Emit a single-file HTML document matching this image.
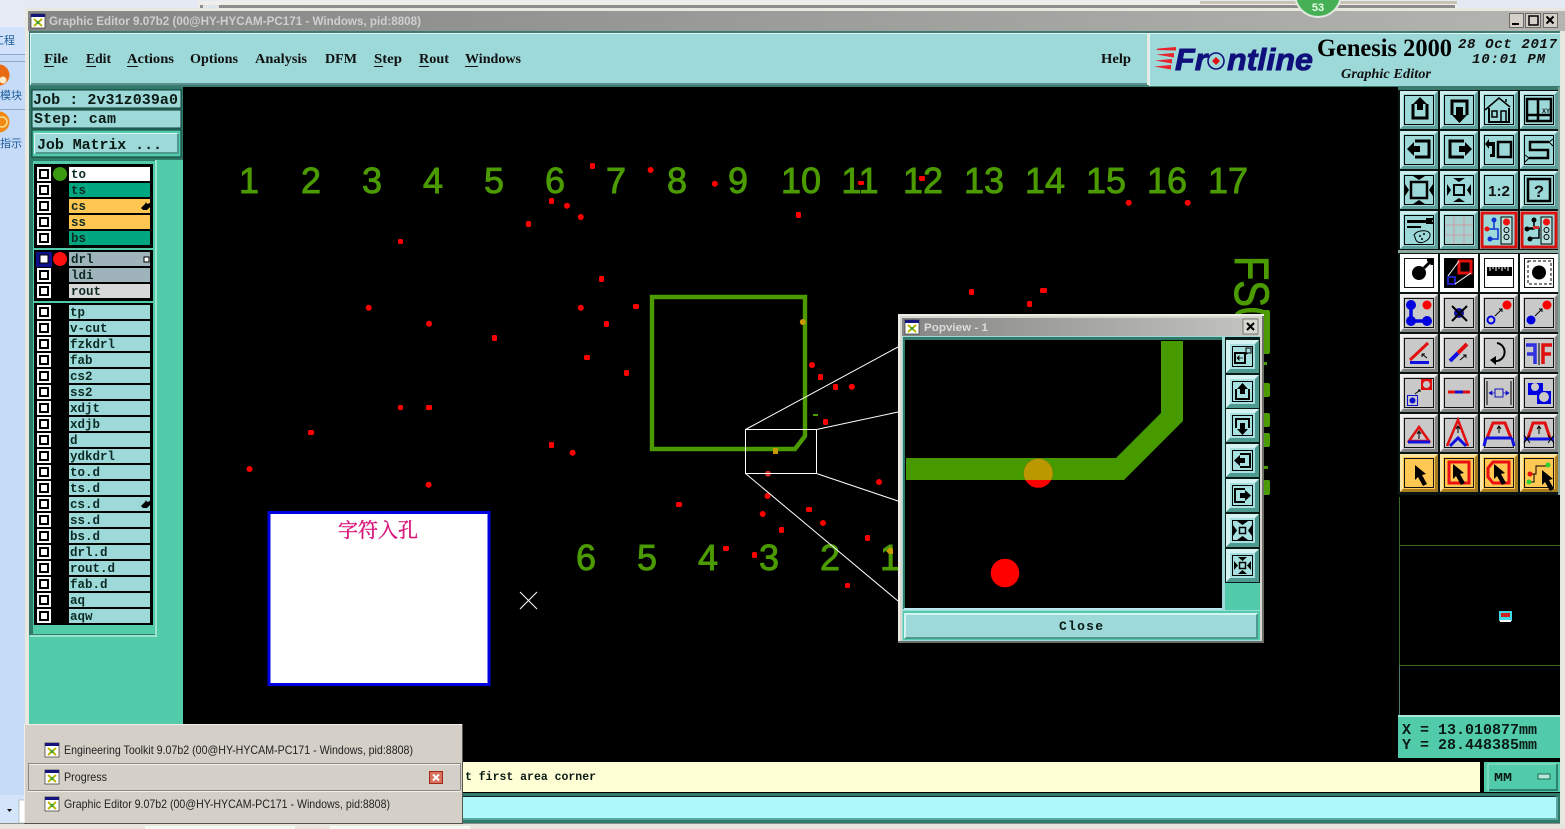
<!DOCTYPE html>
<html><head><meta charset="utf-8"><title>Genesis 2000 Graphic Editor</title>
<style>
html,body{margin:0;padding:0;background:#000;width:1565px;height:829px;overflow:hidden}
svg{display:block}
.m{font-family:"Liberation Mono",monospace;font-weight:bold;fill:#0a1a14}
.l{font-family:"Liberation Mono",monospace;font-weight:bold;font-size:12.5px;fill:#0c2a24}
.s{font-family:"Liberation Serif",serif;font-weight:bold;font-size:14px;fill:#111}
.t{font-family:"Liberation Sans",sans-serif;font-size:12px;fill:#222}
.g{font-family:"Liberation Sans",sans-serif;font-size:36px;fill:#4b9b00;stroke:#4b9b00;stroke-width:.9px}
.dots rect{rx:1.5px;ry:1.5px}
</style></head><body>
<svg width="1565" height="829" viewBox="0 0 1565 829" xmlns="http://www.w3.org/2000/svg">
<defs>
<linearGradient id="tb" x1="0" x2="1" y1="0" y2="0"><stop offset="0" stop-color="#858585"/><stop offset="1" stop-color="#b4b4b0"/></linearGradient>
<linearGradient id="tb2" x1="0" x2="1" y1="0" y2="0"><stop offset="0" stop-color="#858585"/><stop offset="1" stop-color="#c4c4c0"/></linearGradient>
<g id="c"><rect width="38" height="38" fill="#9dd9d9"/><path d="M0,0H38L35,3H3V35L0,38Z" fill="#cdeeee"/><path d="M38,38H0L3,35H35V3L38,0Z" fill="#5f9f9c"/><rect x="4.5" y="4.5" width="29" height="29" fill="none" stroke="#000"/></g>
<g id="a"><rect width="38" height="38" fill="#c9c9c9"/><path d="M0,0H38L35,3H3V35L0,38Z" fill="#efefef"/><path d="M38,38H0L3,35H35V3L38,0Z" fill="#858585"/><rect x="4.5" y="4.5" width="29" height="29" fill="none" stroke="#111"/></g>
<g id="y"><rect width="38" height="38" fill="#ffc852"/><path d="M0,0H38L35,3H3V35L0,38Z" fill="#ffe6a0"/><path d="M38,38H0L3,35H35V3L38,0Z" fill="#a87c20"/><rect x="4.5" y="4.5" width="29" height="29" fill="none" stroke="#111"/></g>
<g id="w"><rect width="38" height="38" fill="#fff"/><rect x="4.5" y="4.5" width="29" height="29" fill="none" stroke="#111"/></g>
<g id="p"><rect width="33" height="33" fill="#a6e0e0"/><path d="M0,0H33L29,4H4V29L0,33Z" fill="#d6f3f3"/><path d="M33,33H0L4,29H29V4L33,0Z" fill="#4f9a90"/><rect x="6.5" y="6.5" width="20" height="20" fill="none" stroke="#000"/></g>
<path id="ar" d="M0,0L11,9L7,10L12,19L8,21L3,12L0,15Z" fill="#000"/>
<g id="ck"><rect width="14" height="14" fill="#fff"/><rect x="3" y="3" width="8" height="8" fill="#fff" stroke="#000" stroke-width="2"/></g>
<g id="ic"><rect width="14" height="14" fill="#fff" stroke="#333" stroke-width=".7"/><rect width="14" height="3" fill="#14147c"/><path d="M3,5L11,12M11,5L3,12" stroke="#b8b800" stroke-width="2"/><rect x="5.5" y="7" width="3" height="3" fill="#40a040"/></g>
<path id="hand" d="M1,7L5,3L6,1L7,3L10,2V6L7,9H3Z" fill="#000"/>
<clipPath id="main"><rect x="183" y="87" width="1215" height="673"/></clipPath>
<clipPath id="tr"><path d="M1161,341H1183V421L1124,480H906V458H1116L1161,413Z"/></clipPath>
<clipPath id="bd"><rect x="1290" y="0" width="60" height="19"/></clipPath>
</defs>

<!-- desktop background -->
<rect width="1565" height="829" fill="#c6dbf8"/>
<rect width="1565" height="9" fill="#e4e9f4"/>
<rect x="198" y="1" width="1259" height="9" fill="#efeee8"/>
<rect x="200" y="5" width="1255" height="5" fill="#8c8c8c"/>
<rect x="203" y="5" width="16" height="5" fill="#dfe4ea"/>
<rect x="1200" y="1" width="257" height="3" fill="#c8c2b4"/>
<rect x="0" y="27" width="25" height="27" fill="#d2e2fa"/>
<rect x="0" y="54" width="25" height="1" fill="#8ea8cc"/><rect x="0" y="61" width="25" height="1" fill="#8ea8cc"/>
<rect x="0" y="109" width="25" height="1" fill="#8ea8cc"/>
<rect x="0" y="0" width="25" height="27" fill="#e6ebf5"/>
<text x="-7" y="44" font-family="'Liberation Sans','Noto Sans CJK SC',sans-serif" font-size="11" fill="#1d5c9a">工程</text>
<circle cx="-1" cy="75" r="10.5" fill="#e96a12"/><circle cx="3" cy="80" r="3.500" fill="#ffe8c8"/>
<text x="0" y="99" font-family="'Liberation Sans','Noto Sans CJK SC',sans-serif" font-size="11" fill="#1d5c9a">模块</text>
<circle cx="-1" cy="122" r="10.5" fill="#f08a14"/><circle cx="2" cy="122" r="5" fill="none" stroke="#ffdf90" stroke-width="1.500"/>
<text x="0" y="147" font-family="'Liberation Sans','Noto Sans CJK SC',sans-serif" font-size="11" fill="#1d5c9a">指示</text>

<!-- main window -->
<rect x="25" y="8" width="1540" height="816" fill="#e8e8e0"/>
<rect x="28" y="11" width="1537" height="20" fill="url(#tb)"/>
<g clip-path="url(#bd)"><circle cx="1318" cy="-6" r="24" fill="#e0e8e0"/><circle cx="1318" cy="-6" r="22" fill="#46b056"/></g>
<text x="1318" y="11" text-anchor="middle" font-family="'Liberation Sans',sans-serif" font-size="11" font-weight="bold" fill="#e8ffe8">53</text>
<use href="#ic" x="31" y="14"/>
<text x="49" y="25" font-family="'Liberation Sans',sans-serif" font-weight="bold" font-size="11.5" fill="#cfcfcf" textLength="372" lengthAdjust="spacingAndGlyphs">Graphic Editor 9.07b2 (00@HY-HYCAM-PC171 - Windows, pid:8808)</text>
<g fill="#d4d0c8" stroke="#555" stroke-width=".8"><rect x="1509.5" y="13.5" width="14" height="14"/><rect x="1525.5" y="13.5" width="15" height="14"/><rect x="1543.5" y="13.5" width="14" height="14"/></g>
<path d="M1512,24h7" stroke="#000" stroke-width="2"/><rect x="1529" y="16" width="9" height="9" fill="none" stroke="#000" stroke-width="1.5"/><path d="M1546.5,16.5l7,7m0,-7l-7,7" stroke="#000" stroke-width="2"/>

<!-- menu bar -->
<rect x="29" y="31" width="1531" height="56" fill="#3c7c70"/>
<rect x="30" y="33" width="1117" height="52" fill="#9dd9d9"/><path d="M30,33H1147V34H31V85H30Z" fill="#e0f6f6"/><rect x="31" y="83" width="1116" height="2" fill="#5a9090"/>
<rect x="1149" y="33" width="411" height="53" fill="#9dd9d9"/><path d="M1149,33H1560V34H1150V86H1149Z" fill="#e0f6f6"/>
<rect x="1147" y="33" width="2" height="52" fill="#e8e8e0"/>
<g class="s">
<text class="s" x="44" y="63" textLength="24" lengthAdjust="spacingAndGlyphs">File</text><rect x="44" y="66" width="10" height="1" fill="#111"/>
<text class="s" x="86" y="63" textLength="25" lengthAdjust="spacingAndGlyphs">Edit</text><rect x="86" y="66" width="10" height="1" fill="#111"/>
<text class="s" x="127" y="63" textLength="47" lengthAdjust="spacingAndGlyphs">Actions</text><rect x="127" y="66" width="11" height="1" fill="#111"/>
<text class="s" x="190" y="63" textLength="48" lengthAdjust="spacingAndGlyphs">Options</text>
<text class="s" x="255" y="63" textLength="52" lengthAdjust="spacingAndGlyphs">Analysis</text>
<text class="s" x="325" y="63" textLength="32" lengthAdjust="spacingAndGlyphs">DFM</text>
<text class="s" x="374" y="63" textLength="28" lengthAdjust="spacingAndGlyphs">Step</text><rect x="374" y="66" width="9" height="1" fill="#111"/>
<text class="s" x="419" y="63" textLength="30" lengthAdjust="spacingAndGlyphs">Rout</text><rect x="419" y="66" width="10" height="1" fill="#111"/>
<text class="s" x="465" y="63" textLength="56" lengthAdjust="spacingAndGlyphs">Windows</text><rect x="465" y="66" width="13" height="1" fill="#111"/>
<text class="s" x="1101" y="63" textLength="30" lengthAdjust="spacingAndGlyphs">Help</text>
</g>
<!-- logo -->
<path d="M1158,48.500L1176,47V50.500L1156,50ZM1156,54.500L1174,53V57.500ZM1155,60.500L1172,59V63.500ZM1154,66.500L1171,65V69.500Z" fill="#e8242c"/>
<text x="1175" y="70" font-family="'Liberation Sans',sans-serif" font-weight="bold" font-style="italic" font-size="31" fill="#10107c" stroke="#10107c" stroke-width=".9" textLength="138" lengthAdjust="spacingAndGlyphs">Fr<tspan fill="transparent" stroke="none">o</tspan>ntline</text>
<circle cx="1216" cy="61" r="8" fill="none" stroke="#10107c" stroke-width="1.6"/><path d="M1216,57l4,4l-4,4l-4,-4Z" fill="#e01010"/>
<text x="1317" y="56" font-family="'Liberation Serif',serif" font-size="25" font-weight="bold" fill="#000" textLength="135" lengthAdjust="spacingAndGlyphs">Genesis 2000</text>
<text x="1341" y="78" font-family="'Liberation Serif',serif" font-size="14" font-weight="bold" font-style="italic" fill="#111" textLength="90" lengthAdjust="spacingAndGlyphs">Graphic Editor</text>
<text x="1458" y="48" font-family="'Liberation Mono',monospace" font-size="14" font-style="italic" font-weight="bold" fill="#111" textLength="99">28 Oct 2017</text>
<text x="1472" y="63" font-family="'Liberation Mono',monospace" font-size="14" font-style="italic" font-weight="bold" fill="#111" textLength="73">10:01 PM</text>

<!-- left panel -->
<rect x="29" y="87" width="155" height="673" fill="#52cbaa"/>
<rect x="29" y="87" width="154" height="73" fill="#2f7a68"/>
<rect x="32" y="90" width="149" height="18" fill="#9dd9d9" stroke="#0e3c34" stroke-width="1"/>
<rect x="32" y="110" width="149" height="18" fill="#9dd9d9" stroke="#0e3c34" stroke-width="1"/>
<text class="m" x="33" y="104" font-size="15" textLength="145">Job : 2v31z039a0</text>
<text class="m" x="34" y="123" font-size="15" textLength="82">Step: cam</text>
<rect x="32" y="130" width="149" height="27" fill="#52cbaa" stroke="#0e3c34"/>
<rect x="34" y="133" width="145" height="21" fill="#9dd9d9"/><path d="M34,133H179L178,134H35V154L34,154Z" fill="#e0f6f6"/><path d="M179,154H35L36,152H177V134L179,133Z" fill="#4f9a90"/>
<text class="m" x="37" y="149" font-size="15" textLength="125">Job Matrix ...</text>
<rect x="29.500" y="160.500" width="126" height="474" fill="#52cbaa" stroke="#2f7a68" stroke-width="1"/>
<rect x="30" y="160" width="3" height="475" fill="#2f7a68"/>
<rect x="155" y="160" width="2" height="476" fill="#9ce4d0"/>
<rect x="30" y="635" width="127" height="2" fill="#9ce4d0"/>

<!-- layer groups -->
<rect x="34" y="164" width="119" height="84" fill="#000"/>
<rect x="34" y="250" width="119" height="51" fill="#000"/>
<rect x="34" y="303" width="119" height="322" fill="#000"/>
<g>
<use href="#ck" x="37" y="167"/><rect x="69" y="167" width="81" height="14" fill="#fff"/><circle cx="60" cy="174" r="7" fill="#3c9a10"/><text class="l" x="71" y="178">to</text>
<use href="#ck" x="37" y="183"/><rect x="69" y="183" width="81" height="14" fill="#00a680"/><text class="l" x="71" y="194">ts</text>
<use href="#ck" x="37" y="199"/><rect x="69" y="199" width="81" height="14" fill="#ffc652"/><text class="l" x="71" y="210">cs</text><use href="#hand" x="140" y="201"/>
<use href="#ck" x="37" y="215"/><rect x="69" y="215" width="81" height="14" fill="#ffc652"/><text class="l" x="71" y="226">ss</text>
<use href="#ck" x="37" y="231"/><rect x="69" y="231" width="81" height="14" fill="#00a680"/><text class="l" x="71" y="242">bs</text>

<rect x="36" y="252" width="16" height="15" fill="#10108c"/><rect x="40" y="255" width="8" height="8" fill="#fff" stroke="#000"/><circle cx="60" cy="259" r="7" fill="#ff1010"/><rect x="69" y="252" width="81" height="14" fill="#9fb4ba"/><text class="l" x="71" y="263">drl</text><rect x="144" y="257" width="5" height="5" fill="#fff" stroke="#000"/>
<use href="#ck" x="37" y="268"/><rect x="69" y="268" width="81" height="14" fill="#9fb4ba"/><text class="l" x="71" y="279">ldi</text>
<use href="#ck" x="37" y="284"/><rect x="69" y="284" width="81" height="14" fill="#d8d8d8"/><text class="l" x="71" y="295">rout</text>

<g fill="#9dd9d9">
<rect x="69" y="305" width="81" height="14"/><rect x="69" y="321" width="81" height="14"/><rect x="69" y="337" width="81" height="14"/><rect x="69" y="353" width="81" height="14"/><rect x="69" y="369" width="81" height="14"/><rect x="69" y="385" width="81" height="14"/><rect x="69" y="401" width="81" height="14"/><rect x="69" y="417" width="81" height="14"/><rect x="69" y="433" width="81" height="14"/><rect x="69" y="449" width="81" height="14"/><rect x="69" y="465" width="81" height="14"/><rect x="69" y="481" width="81" height="14"/><rect x="69" y="497" width="81" height="14"/><rect x="69" y="513" width="81" height="14"/><rect x="69" y="529" width="81" height="14"/><rect x="69" y="545" width="81" height="14"/><rect x="69" y="561" width="81" height="14"/><rect x="69" y="577" width="81" height="14"/><rect x="69" y="593" width="81" height="14"/><rect x="69" y="609" width="81" height="14"/>
</g>
<use href="#ck" x="37" y="305"/><use href="#ck" x="37" y="321"/><use href="#ck" x="37" y="337"/><use href="#ck" x="37" y="353"/><use href="#ck" x="37" y="369"/><use href="#ck" x="37" y="385"/><use href="#ck" x="37" y="401"/><use href="#ck" x="37" y="417"/><use href="#ck" x="37" y="433"/><use href="#ck" x="37" y="449"/><use href="#ck" x="37" y="465"/><use href="#ck" x="37" y="481"/><use href="#ck" x="37" y="497"/><use href="#ck" x="37" y="513"/><use href="#ck" x="37" y="529"/><use href="#ck" x="37" y="545"/><use href="#ck" x="37" y="561"/><use href="#ck" x="37" y="577"/><use href="#ck" x="37" y="593"/><use href="#ck" x="37" y="609"/>
<text class="l" x="70" y="316">tp</text><text class="l" x="70" y="332">v-cut</text><text class="l" x="70" y="348">fzkdrl</text><text class="l" x="70" y="364">fab</text><text class="l" x="70" y="380">cs2</text><text class="l" x="70" y="396">ss2</text><text class="l" x="70" y="412">xdjt</text><text class="l" x="70" y="428">xdjb</text><text class="l" x="70" y="444">d</text><text class="l" x="70" y="460">ydkdrl</text><text class="l" x="70" y="476">to.d</text><text class="l" x="70" y="492">ts.d</text><text class="l" x="70" y="508">cs.d</text><text class="l" x="70" y="524">ss.d</text><text class="l" x="70" y="540">bs.d</text><text class="l" x="70" y="556">drl.d</text><text class="l" x="70" y="572">rout.d</text><text class="l" x="70" y="588">fab.d</text><text class="l" x="70" y="604">aq</text><text class="l" x="70" y="620">aqw</text>
<use href="#hand" x="140" y="499"/>
</g>

<!-- main canvas -->
<rect x="183" y="87" width="1215" height="673" fill="#000"/>
<g clip-path="url(#main)">
<g text-anchor="middle">
<text class="g" x="249" y="193">1</text><text class="g" x="311" y="193">2</text><text class="g" x="372" y="193">3</text><text class="g" x="433" y="193">4</text><text class="g" x="494" y="193">5</text><text class="g" x="555" y="193">6</text><text class="g" x="616" y="193">7</text><text class="g" x="677" y="193">8</text><text class="g" x="738" y="193">9</text><text class="g" x="801" y="193">10</text><text class="g" x="860" y="193">11</text><text class="g" x="923" y="193">12</text><text class="g" x="984" y="193">13</text><text class="g" x="1045" y="193">14</text><text class="g" x="1106" y="193">15</text><text class="g" x="1167" y="193">16</text><text class="g" x="1228" y="193">17</text>
<text class="g" x="586" y="570">6</text><text class="g" x="647" y="570">5</text><text class="g" x="708" y="570">4</text><text class="g" x="769" y="570">3</text><text class="g" x="830" y="570">2</text><text class="g" x="890" y="570">1</text>
</g>
<text transform="translate(1235,256) rotate(90) scale(.83,1)" font-family="'Liberation Sans',sans-serif" font-size="48" fill="#4b9b00" stroke="#4b9b00" stroke-width="1">FS0</text>
<g fill="#4b9b00"><rect x="1262" y="310" width="8" height="44" rx="2"/><rect x="1262" y="362" width="5" height="3"/><rect x="1262" y="383" width="8" height="14" rx="2"/><rect x="1262" y="413" width="8" height="14" rx="2"/><rect x="1262" y="433" width="8" height="14" rx="2"/><rect x="1262" y="466" width="6" height="3"/><rect x="1262" y="480" width="8" height="15" rx="2"/></g>
<path d="M652,449V297H805V436L795,449H652Z" fill="none" stroke="#4b9b00" stroke-width="4.400"/>
<g fill="#ff0000" class="dots">
<rect x="590" y="163" width="5" height="6"/><circle cx="650.600" cy="170" r="3"/><circle cx="714.800" cy="183.700" r="3"/><rect x="858" y="181" width="6" height="4"/><rect x="549" y="198" width="5" height="6"/><circle cx="567" cy="205.700" r="3"/><circle cx="580.800" cy="217" r="3"/><rect x="526" y="221" width="5" height="6"/><rect x="796" y="212" width="5" height="6"/><rect x="398" y="239" width="5" height="5"/><rect x="599" y="276" width="5" height="6"/><circle cx="368.700" cy="307.700" r="3"/><circle cx="580.800" cy="307.700" r="3"/><rect x="633" y="304" width="6" height="5"/><circle cx="429" cy="323.700" r="3"/><rect x="604" y="321" width="5" height="6"/><rect x="492" y="335" width="5" height="6"/><rect x="584" y="355" width="6" height="5"/><rect x="624" y="370" width="5" height="6"/><circle cx="812" cy="365" r="3"/><rect x="818" y="374" width="5" height="6"/><rect x="833" y="384" width="5" height="6"/><circle cx="851.800" cy="386.700" r="3"/><rect x="398" y="405" width="5" height="5"/><rect x="426" y="405" width="6" height="5"/><rect x="823" y="419" width="5" height="6"/><rect x="308" y="430" width="6" height="5"/><rect x="549" y="442" width="5" height="6"/><circle cx="572.600" cy="452.700" r="3"/><circle cx="249.500" cy="469" r="3"/><circle cx="428.600" cy="484.700" r="3"/><circle cx="768" cy="473.700" r="3" fill="#c83030"/><circle cx="767.500" cy="496" r="3"/><circle cx="879" cy="482" r="3"/><rect x="676" y="502" width="6" height="5"/><circle cx="762.700" cy="514" r="3"/><rect x="806" y="507" width="6" height="5"/><circle cx="823" cy="523" r="3"/><rect x="779" y="527" width="5" height="6"/><rect x="865" y="535" width="5" height="6"/><rect x="723" y="546" width="6" height="5"/><rect x="752" y="552" width="5" height="6"/><rect x="845" y="583" width="5" height="5"/><rect x="919" y="176" width="6" height="5"/><circle cx="1128.700" cy="202.700" r="3"/><circle cx="1187.700" cy="202.700" r="3"/><rect x="969" y="289" width="5" height="6"/><rect x="1040" y="288" width="7" height="5"/><rect x="1027" y="301" width="5" height="6"/>
</g>
<g fill="#c89a00"><circle cx="802.800" cy="322" r="3"/><rect x="773" y="448" width="5" height="6"/><path d="M886,551l4,-4l3,2v5h-4z"/></g>
<rect x="813" y="414" width="5" height="2" fill="#4b9b00"/>
<g fill="none" stroke="#fff" stroke-width="1"><rect x="745.500" y="429.500" width="71" height="44"/><path d="M745.500,429.500L898,347M816.500,429.500L898,412M816.500,473.500L898,501M745.500,473.500L898,601M520,592L537,609M537,592L520,609"/></g>
<rect x="269" y="512.500" width="220" height="172" fill="#fff" stroke="#0000e0" stroke-width="3"/>
<text x="378" y="537" text-anchor="middle" font-family="'Liberation Serif','Noto Serif CJK SC',serif" font-size="20" fill="#d8187c" stroke="#d8187c" stroke-width=".4">字符入孔</text>
</g>

<!-- right toolbars -->
<rect x="1398" y="87" width="162" height="410" fill="#0a1412"/>
<rect x="1398" y="87" width="162" height="3" fill="#3c7c70"/>
<rect x="1558" y="87" width="2" height="410" fill="#7f9f98"/>
<rect x="1398" y="250" width="162" height="3" fill="#8aa8a0"/>
<g>
<use href="#c" x="1400" y="91"/><use href="#c" x="1440" y="91"/><use href="#c" x="1480" y="91"/><use href="#c" x="1520" y="91"/>
<use href="#c" x="1400" y="131"/><use href="#c" x="1440" y="131"/><use href="#c" x="1480" y="131"/><use href="#c" x="1520" y="131"/>
<use href="#c" x="1400" y="171"/><use href="#c" x="1440" y="171"/><use href="#c" x="1480" y="171"/><use href="#c" x="1520" y="171"/>
<use href="#c" x="1400" y="211"/><use href="#c" x="1440" y="211"/><use href="#c" x="1480" y="211"/><use href="#c" x="1520" y="211"/>
<use href="#w" x="1400" y="254"/><rect x="1440" y="254" width="38" height="38" fill="#fff"/><rect x="1444" y="258" width="30" height="30" fill="#000"/><use href="#w" x="1480" y="254"/><use href="#w" x="1520" y="254"/>
<use href="#a" x="1400" y="294"/><use href="#a" x="1440" y="294"/><use href="#a" x="1480" y="294"/><use href="#a" x="1520" y="294"/>
<use href="#a" x="1400" y="334"/><use href="#a" x="1440" y="334"/><use href="#a" x="1480" y="334"/><use href="#a" x="1520" y="334"/>
<use href="#a" x="1400" y="374"/><use href="#a" x="1440" y="374"/><use href="#a" x="1480" y="374"/><use href="#a" x="1520" y="374"/>
<use href="#a" x="1400" y="414"/><use href="#a" x="1440" y="414"/><use href="#a" x="1480" y="414"/><use href="#a" x="1520" y="414"/>
<use href="#y" x="1400" y="454"/><use href="#y" x="1440" y="454"/><use href="#y" x="1480" y="454"/><use href="#y" x="1520" y="454"/>
</g>
<!-- row 1 icons -->
<g transform="translate(1400,91)"><path d="M13,13V27H27V13" fill="none" stroke="#000" stroke-width="3"/><path d="M20,6L27,13H23V19H17V13H13Z"/></g>
<g transform="translate(1440,91)"><path d="M12,24V10H27V24" fill="none" stroke="#000" stroke-width="3"/><path d="M16,16H23V24H27L19.500,32L12,24H16Z"/></g>
<g transform="translate(1480,91)" fill="none" stroke="#000" stroke-width="1.500"><path d="M5,19L19,7L30,16"/><path d="M9,17V31H29V17" stroke-width="2"/><rect x="12" y="20" width="5" height="6"/><path d="M21,31V20H26V31"/><path d="M26,11V8" stroke-width="1.500"/></g>
<g transform="translate(1520,91)"><g fill="none" stroke="#000" stroke-width="2.500"><rect x="7" y="8" width="24" height="22"/><path d="M7,24H31M18,8V30"/></g><text x="22" y="22" font-family="'Liberation Sans',sans-serif" font-size="6" font-weight="bold" fill="#111">XY</text></g>
<!-- row 2 -->
<g transform="translate(1400,131)"><path d="M15,10H29V26H15" fill="none" stroke="#000" stroke-width="3"/><path d="M7,18L14,11V15H20V21H14V25Z"/></g>
<g transform="translate(1440,131)"><path d="M24,10H10V26H24" fill="none" stroke="#000" stroke-width="3"/><path d="M32,18L25,11V15H19V21H25V25Z"/></g>
<g transform="translate(1480,131)"><rect x="18" y="11" width="13" height="15" fill="none" stroke="#000" stroke-width="2.500"/><path d="M15,26H10V23H12V15H9V18L5,13L9,8V11H15Z"/></g>
<g transform="translate(1520,131)" fill="none" stroke="#000"><path d="M29,11H10V19H28V27H9" stroke-width="2.500"/><path d="M33,8L29,11L33,15M5,24L9,27L5,31" stroke-width="1"/></g>
<!-- row 3 -->
<g transform="translate(1400,171)"><rect x="11" y="11" width="16" height="16" fill="none" stroke="#000" stroke-width="2.500"/><path d="M19,9L13,5H25ZM19,29L13,33H25ZM9,19L5,13V25ZM29,19L33,13V25Z"/></g>
<g transform="translate(1440,171)"><rect x="14" y="14" width="10" height="10" fill="none" stroke="#000" stroke-width="2"/><path d="M19,11L13,7H25ZM19,27L13,31H25ZM11,19L7,13V25ZM27,19L31,13V25Z"/></g>
<g transform="translate(1480,171)"><text x="19" y="25" text-anchor="middle" font-family="'Liberation Sans',sans-serif" font-size="15" font-weight="bold" fill="#111" textLength="22" lengthAdjust="spacingAndGlyphs">1:2</text></g>
<g transform="translate(1520,171)"><rect x="8" y="8" width="22" height="22" fill="none" stroke="#000" stroke-width="2.500"/><text x="19" y="26" text-anchor="middle" font-family="'Liberation Sans',sans-serif" font-size="17" font-weight="bold" fill="#111">?</text></g>
<!-- row 4 -->
<g transform="translate(1400,211)"><rect x="7" y="9" width="20" height="3" fill="#000"/><path d="M26,7h8l-2,3l2,3h-8z"/><rect x="7" y="15" width="14" height="2" fill="#000"/><path d="M14,24C17,19 28,18 30,23C31,29 22,33 18,31C15,30 16,27 14,24Z" fill="none" stroke="#000"/><circle cx="20" cy="25" r="1"/><circle cx="24" cy="23" r="1"/><circle cx="22" cy="28" r="1"/></g>
<g transform="translate(1440,211)"><rect x="5" y="5" width="28" height="28" fill="#a8d0d0"/><path d="M14,5V33M24,5V33M5,14H33M5,24H33" stroke="#c8a0a8"/></g>
<g transform="translate(1480,211)"><rect x="2" y="2" width="34" height="34" fill="#9dd9d9" stroke="#d81010" stroke-width="3"/><rect x="21" y="6" width="11" height="27" fill="#b8dede" stroke="#000"/><circle cx="26.500" cy="11" r="3.500" fill="#f01010"/><circle cx="26.500" cy="19" r="2.500" fill="none" stroke="#000"/><circle cx="26.500" cy="26" r="2.500" fill="none" stroke="#000"/><path d="M14,9V18H7M14,18H18V28H10" fill="none" stroke="#1030d0" stroke-width="1.500"/><circle cx="14" cy="9" r="2.500" fill="#1030d0"/><circle cx="7" cy="18" r="2.500" fill="#f01010"/><circle cx="10" cy="28" r="2.500" fill="#1030d0"/></g>
<g transform="translate(1520,211)"><rect x="2" y="2" width="34" height="34" fill="#9dd9d9" stroke="#d81010" stroke-width="3"/><rect x="21" y="6" width="11" height="27" fill="#b8dede" stroke="#000"/><circle cx="26.500" cy="11" r="3.500" fill="#f01010"/><circle cx="26.500" cy="19" r="2.500" fill="none" stroke="#000"/><circle cx="26.500" cy="26" r="2.500" fill="none" stroke="#000"/><path d="M14,9V18H7M9,17H19V27H10" fill="none" stroke="#000" stroke-width="1.500"/><circle cx="14" cy="9" r="2.500"/><circle cx="7" cy="18" r="2.500"/><circle cx="10" cy="28" r="2.500"/><path d="M13,15h6v3h-6z" fill="#d03030"/></g>
<!-- group 2 row 1 -->
<g transform="translate(1400,254)"><circle cx="19" cy="19" r="7"/><path d="M24,14L32,6M27,6H32V11" fill="none" stroke="#000" stroke-width="3"/></g>
<g transform="translate(1440,254)"><rect x="19" y="7" width="12" height="12" fill="none" stroke="#e01010" stroke-width="3"/><rect x="8" y="23" width="7" height="7" fill="none" stroke="#2020c0" stroke-width="2"/><path d="M8,22L19,7M15,30L31,19" stroke="#fff"/></g>
<g transform="translate(1480,254)"><rect x="7" y="13" width="25" height="9"/><path d="M10,13v4M13,13v2M16,13v4M19,13v2M22,13v4M25,13v2M28,13v4" stroke="#fff"/></g>
<g transform="translate(1520,254)"><rect x="8" y="7" width="23" height="23" fill="none" stroke="#000" stroke-dasharray="3 2"/><circle cx="19" cy="18.500" r="7"/></g>
<!-- group 2 row 2 -->
<g transform="translate(1400,294)"><path d="M11,11V27H27" fill="none" stroke="#0000e0" stroke-width="3.500"/><circle cx="11" cy="11" r="5" fill="#0000e0"/><circle cx="27" cy="11" r="4.500" fill="#ff0000"/><circle cx="11" cy="27" r="5" fill="#0000e0"/><circle cx="27" cy="27" r="5" fill="#0000e0"/></g>
<g transform="translate(1440,294)"><circle cx="19" cy="19" r="5" fill="#1010a0"/><path d="M12,12L27,27M27,12L12,27" stroke="#000" stroke-width="2"/></g>
<g transform="translate(1480,294)"><circle cx="27" cy="11" r="4.500" fill="#ff0000"/><circle cx="11" cy="26" r="3.500" fill="none" stroke="#0000e0" stroke-width="2"/><path d="M15,22L22,15M19,15H22V18" fill="none" stroke="#000"/></g>
<g transform="translate(1520,294)"><circle cx="27" cy="11" r="4.500" fill="#ff0000"/><circle cx="11" cy="26" r="4.500" fill="#0000e0"/><path d="M15,22L22,15M19,15H22V18" fill="none" stroke="#000"/></g>
<!-- group 2 row 3 -->
<g transform="translate(1400,334)"><path d="M10,26L28,9" stroke="#e01010" stroke-width="3"/><path d="M10,28.500H29" stroke="#1010e0" stroke-width="3"/><path d="M22,20L27,24M22,20h3M22,20v3" stroke="#000"/></g>
<g transform="translate(1440,334)"><path d="M10,27L18,19" stroke="#1010e0" stroke-width="4"/><path d="M18,19L27,10" stroke="#e01010" stroke-width="4"/><path d="M20,26L26,21M23,21h3v3" stroke="#000" fill="none"/></g>
<g transform="translate(1480,334)"><path d="M17,9A9,9 0 1 1 14,27" fill="none" stroke="#000" stroke-width="2"/><path d="M10,26L16,22V31Z"/></g>
<g transform="translate(1520,334)"><path d="M19,9V31" stroke="#000"/><path d="M23,30V11H32M23,20H31" fill="none" stroke="#e01010" stroke-width="3.500"/><path d="M15,30V11H6M15,20H7" fill="none" stroke="#3030e0" stroke-width="3.500"/></g>
<!-- group 2 row 4 -->
<g transform="translate(1400,374)"><rect x="21" y="5" width="11" height="11" fill="#e01010"/><circle cx="26.500" cy="10.500" r="3.500" fill="#c9c9c9"/><rect x="7.500" y="21.500" width="10" height="10" fill="none" stroke="#1010d0"/><circle cx="12.500" cy="26.500" r="3" fill="#1010d0"/><path d="M15,20L20,16M18,16h2v2" fill="none" stroke="#000"/></g>
<g transform="translate(1440,374)"><path d="M8,18H30" stroke="#e01010" stroke-width="3"/><path d="M15,18H23" stroke="#1010d0" stroke-width="3"/></g>
<g transform="translate(1480,374)"><path d="M7,7V31M31,7V31" stroke="#000"/><path d="M9,19H29M9,19l3,-2v4zM29,19l-3,-2v4z" stroke="#1010c0" fill="#1010c0" stroke-width=".7"/><rect x="15" y="15" width="8" height="8" fill="#c9c9c9" stroke="#1010c0"/></g>
<g transform="translate(1520,374)"><rect x="8" y="9" width="15" height="12" fill="#0000e0"/><rect x="17" y="17" width="14" height="13" fill="#0000e0"/><circle cx="15" cy="13" r="4" fill="#c9c9c9"/><circle cx="24" cy="23" r="5" fill="#c9c9c9"/></g>
<!-- group 2 row 5 -->
<g transform="translate(1400,414)"><path d="M19,13L29,27H9Z" fill="none" stroke="#e01010" stroke-width="2.500"/><path d="M8,28H30" stroke="#1010e0" stroke-width="3"/><path d="M19,25V18M17,20l2,-3l2,3" stroke="#000" fill="none"/></g>
<g transform="translate(1440,414)"><path d="M7,32L18,6L28,32" fill="none" stroke="#e01010" stroke-width="2.500"/><path d="M10,32L18,24L26,32" fill="none" stroke="#1010e0" stroke-width="3"/><path d="M18,19V13M16,15l2,-3l2,3" stroke="#000" fill="none"/></g>
<g transform="translate(1480,414)"><path d="M7,24L13,9H25L31,24" fill="none" stroke="#e01010" stroke-width="3"/><path d="M6,24H32M6,24L4,32M32,24L34,32" fill="none" stroke="#1010e0" stroke-width="3"/><path d="M19,19V13M17,15l2,-3l2,3" stroke="#000" fill="none"/></g>
<g transform="translate(1520,414)"><path d="M8,24L13,9H25L30,24" fill="none" stroke="#e01010" stroke-width="3"/><path d="M4,25H34" stroke="#1010e0" stroke-width="3"/><path d="M4,21L10,29M10,21L4,29M28,21L34,29M34,21L28,29" stroke="#000"/><path d="M19,20V13M17,15l2,-3l2,3" stroke="#000" fill="none"/></g>
<!-- group 2 row 6 -->
<use href="#ar" x="1415" y="465"/>
<g transform="translate(1440,454)"><rect x="9" y="8" width="20" height="21" fill="none" stroke="#e81010" stroke-width="3"/><use href="#ar" x="13" y="10"/></g>
<g transform="translate(1480,454)"><path d="M13,8H29V29H13L8,23V14Z" fill="none" stroke="#e81010" stroke-width="3"/><use href="#ar" x="14" y="10"/></g>
<g transform="translate(1520,454)"><path d="M10,20H16V12H28M9,28H14V20" fill="none" stroke="#000"/><circle cx="10" cy="20" r="2.500" fill="#e81010"/><circle cx="28" cy="11" r="2.500" fill="#30d030"/><circle cx="9" cy="28" r="2.500" fill="#30d030"/><use href="#ar" x="22" y="16"/></g>

<!-- mini view -->
<rect x="1398" y="495" width="162" height="221" fill="#000"/>
<path d="M1399.500,497V665M1399,545.500H1560M1399,665.500H1560" stroke="#3a6a20" fill="none"/>
<path d="M1399.500,665V715" stroke="#4a7a70"/>
<rect x="1499" y="611" width="13" height="10" fill="#40d8e8"/><rect x="1501" y="613" width="9" height="4" fill="#d02020"/><rect x="1500" y="620" width="11" height="2" fill="#fff"/>

<!-- coords -->
<rect x="1398" y="715" width="162" height="45" fill="#000"/>
<rect x="1398" y="715" width="162" height="43" fill="#52cbaa"/>
<rect x="1398" y="715" width="162" height="2" fill="#a8e6d8"/>
<text class="m" x="1402" y="734" font-size="15" textLength="135">X = 13.010877mm</text>
<text class="m" x="1402" y="749" font-size="15" textLength="135">Y = 28.448385mm</text>

<!-- message / status bars -->
<rect x="183" y="760" width="1377" height="36" fill="#000"/>
<rect x="463" y="762" width="1017" height="30" fill="#ffffd6"/>
<text class="m" x="465" y="780" font-size="11.500" fill="#111" textLength="131">t first area corner</text>
<rect x="1484" y="762" width="76" height="30" fill="#52cbaa"/>
<rect x="1488" y="764" width="69" height="26" fill="#52cbaa" stroke="#9ce4d0"/>
<path d="M1489,790H1557V764" stroke="#1f6a58" fill="none" stroke-width="1.500"/>
<text class="m" x="1494" y="781" font-size="12" textLength="18" lengthAdjust="spacingAndGlyphs">MM</text>
<rect x="1538" y="774" width="12" height="5" fill="#b8e8d8" stroke="#1f6a58"/>
<rect x="28" y="793" width="1532" height="31" fill="#2f7a68"/>
<rect x="463" y="797" width="1093" height="21" fill="#adf9f9"/>
<rect x="463" y="796" width="1093" height="1" fill="#123"/>
<rect x="463" y="818" width="1095" height="2" fill="#5aa8a0"/>
<rect x="1556" y="797" width="2" height="22" fill="#5aa8a0"/>
<rect x="0" y="824" width="1565" height="5" fill="#e8e6dc"/>
<rect x="0" y="823" width="1565" height="1" fill="#8c8c88"/>
<rect x="145" y="826" width="150" height="3" fill="#f8f8f4"/><rect x="330" y="826" width="140" height="3" fill="#f8f8f4"/>
<rect x="1560" y="87" width="5" height="737" fill="#e8e8e0"/>
<rect x="0" y="795" width="25" height="28" fill="#d4e4fa"/>
<path d="M7,809h5l-2.500,3z" fill="#111"/>
<rect x="19" y="800" width="6" height="23" fill="#fff" stroke="#9aa" stroke-width=".7"/>

<!-- popview -->
<rect x="898" y="314" width="366" height="329" fill="#d8d8d0"/>
<path d="M898,314H1264V316H900V643H898Z" fill="#ececE4"/>
<path d="M1264,643H898V641H1262V316H1264Z" fill="#6e6e68"/>
<rect x="902" y="318" width="356" height="18" fill="url(#tb2)"/>
<use href="#ic" x="905" y="320"/>
<text x="924" y="331" font-family="'Liberation Sans',sans-serif" font-weight="bold" font-size="11" fill="#dcdcd8" textLength="64" lengthAdjust="spacingAndGlyphs">Popview - 1</text>
<rect x="1243" y="319" width="15" height="15" fill="#d8d8d0" stroke="#555" stroke-width=".7"/>
<path d="M1247,323l7,7m0,-7l-7,7" stroke="#000" stroke-width="2"/>
<rect x="902" y="336" width="358" height="305" fill="#9dd9d9"/>
<rect x="903" y="337" width="320" height="3" fill="#2f7a68"/>
<rect x="903" y="337" width="3" height="272" fill="#2f7a68"/>
<rect x="905" y="340" width="317" height="268" fill="#000"/>
<rect x="904" y="608" width="320" height="2" fill="#b8ecec"/>
<rect x="1222" y="337" width="3" height="273" fill="#9dd9d9"/>
<rect x="1225" y="337" width="35" height="273" fill="#0a1c18"/>
<rect x="1225" y="583" width="35" height="27" fill="#52cbaa"/>
<path d="M1161,341H1183V421L1124,480H906V458H1116L1161,413Z" fill="#469a00"/>
<circle cx="1038.300" cy="473.300" r="14.500" fill="#ff0000"/>
<circle cx="1038.300" cy="473.300" r="14.500" fill="#bb9800" clip-path="url(#tr)"/>
<circle cx="1005" cy="573" r="14.300" fill="#ff0000"/>
<g>
<use href="#p" x="1226" y="340"/><use href="#p" x="1226" y="375"/><use href="#p" x="1226" y="409"/><use href="#p" x="1226" y="444"/><use href="#p" x="1226" y="479"/><use href="#p" x="1226" y="514"/><use href="#p" x="1226" y="549"/>
</g>
<g transform="translate(1226,340)"><rect x="9" y="13" width="10" height="10" fill="none" stroke="#000" stroke-width="2"/><rect x="20" y="8" width="5" height="5" fill="none" stroke="#000"/><path d="M11,18h6M11,18l2,-2v4z" stroke="#000" stroke-width=".8"/><path d="M19,15l3,-2" stroke="#000"/></g>
<g transform="translate(1226,375)"><path d="M10,14V24H23V14" fill="none" stroke="#000" stroke-width="2"/><path d="M16.500,8L22,14H19V19H14V14H11Z"/></g>
<g transform="translate(1226,409)"><path d="M10,19V10H23V19" fill="none" stroke="#000" stroke-width="2"/><path d="M16.500,26L22,20H19V14H14V20H11Z"/></g>
<g transform="translate(1226,444)"><path d="M14,10H24V23H14" fill="none" stroke="#000" stroke-width="2"/><path d="M8,16.500L14,11V14H19V19H14V22Z"/></g>
<g transform="translate(1226,479)"><path d="M19,10H9V23H19" fill="none" stroke="#000" stroke-width="2"/><path d="M25,16.500L19,11V14H14V19H19V22Z"/></g>
<g transform="translate(1226,514)"><rect x="13.500" y="13.500" width="6" height="6" fill="none" stroke="#000" stroke-width="1.500"/><path d="M16.500,11L11,7H22ZM16.500,22L11,26H22ZM11,16.500L7,11V22ZM22,16.500L26,11V22Z"/></g>
<g transform="translate(1226,549)"><rect x="13.500" y="13.500" width="6" height="6" fill="none" stroke="#000" stroke-width="1.500"/><path d="M16.500,12L12,8H21ZM16.500,21L12,25H21ZM12,16.500L8,12V21ZM21,16.500L25,12V21Z"/></g>
<rect x="903" y="611" width="357" height="29" fill="#52cbaa"/>
<rect x="904" y="613" width="354" height="26" fill="#9dd9d9"/>
<path d="M904,613H1258L1256,615H906V639H904Z" fill="#d6f3f3"/><path d="M1258,639H904L906,637H1256V615L1258,613Z" fill="#4f9a90"/>
<text class="m" x="1059" y="630" font-size="13" fill="#111" textLength="44">Close</text>

<!-- taskbar popup -->
<rect x="24" y="724" width="439" height="100" fill="#d4d0c8"/>
<path d="M24,724H463V725H25V824H24Z" fill="#f0eee8"/>
<path d="M463,724V824H24V823H462V724Z" fill="#55554f"/>
<rect x="28" y="763" width="432" height="1" fill="#888880"/>
<rect x="28" y="764" width="432" height="1" fill="#f4f2ec"/>
<rect x="28" y="790" width="432" height="1" fill="#888880"/>
<rect x="28" y="791" width="432" height="1" fill="#f4f2ec"/>
<rect x="28" y="763" width="1" height="27" fill="#888880"/><rect x="460" y="763" width="1" height="27" fill="#888880"/>
<use href="#ic" x="45" y="743"/><use href="#ic" x="45" y="770"/><use href="#ic" x="45" y="797"/>
<text class="t" x="64" y="754" textLength="349" lengthAdjust="spacingAndGlyphs">Engineering Toolkit 9.07b2 (00@HY-HYCAM-PC171 - Windows, pid:8808)</text>
<text class="t" x="64" y="781" textLength="43" lengthAdjust="spacingAndGlyphs">Progress</text>
<text class="t" x="64" y="808" textLength="326" lengthAdjust="spacingAndGlyphs">Graphic Editor 9.07b2 (00@HY-HYCAM-PC171 - Windows, pid:8808)</text>
<rect x="429.500" y="771.500" width="13" height="12" fill="#d87060" stroke="#a02818"/>
<path d="M433,774.500l6,6m0,-6l-6,6" stroke="#fff" stroke-width="2"/>
</svg>
</body></html>
